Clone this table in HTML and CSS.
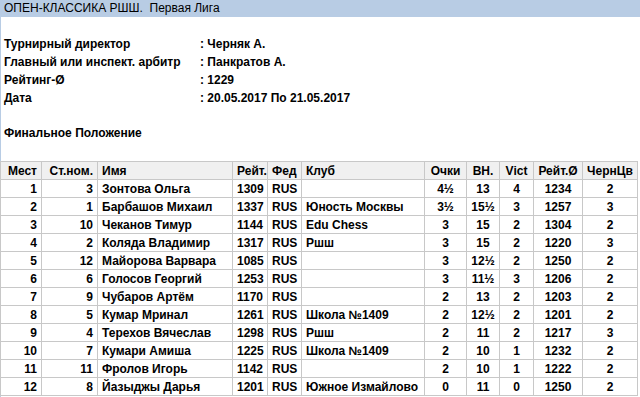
FILE: index.html
```html
<!DOCTYPE html>
<html lang="ru">
<head>
<meta charset="utf-8">
<link rel="stylesheet" href="styles.css">
</head>
<body>
<div class="page">
  <div class="title-bar">ОПЕН-КЛАССИКА РШШ.&nbsp; Первая Лига</div>
  <div class="info">
    <div class="info-row"><span class="info-label">Турнирный директор</span><span>: Черняк А.</span></div>
    <div class="info-row"><span class="info-label">Главный или инспект. арбитр</span><span>: Панкратов А.</span></div>
    <div class="info-row"><span class="info-label">Рейтинг-Ø</span><span>: 1229</span></div>
    <div class="info-row"><span class="info-label">Дата</span><span>: 20.05.2017 По 21.05.2017</span></div>
  </div>
  <div class="section-title">Финальное Положение</div>
  <table class="standings">
    <colgroup>
      <col class="c-place"><col class="c-start"><col class="c-name"><col class="c-rat"><col class="c-fed"><col class="c-club"><col class="c-pts"><col class="c-bh"><col class="c-vict"><col class="c-avg"><col class="c-black">
    </colgroup>
    <thead>
      <tr>
        <th class="r">Мест</th><th class="r">Ст.ном.</th><th class="l">Имя</th><th class="r">Рейт.</th><th class="l">Фед</th><th class="l">Клуб</th><th>Очки</th><th>ВН.</th><th>Vict</th><th>Рейт.Ø</th><th>ЧернЦв</th>
      </tr>
    </thead>
    <tbody>
      <tr><td class="r">1</td><td class="r">3</td><td class="l">Зонтова Ольга</td><td class="r">1309</td><td class="l">RUS</td><td class="l"></td><td>4½</td><td>13</td><td>4</td><td>1234</td><td>2</td></tr>
      <tr><td class="r">2</td><td class="r">1</td><td class="l">Барбашов Михаил</td><td class="r">1337</td><td class="l">RUS</td><td class="l">Юность Москвы</td><td>3½</td><td>15½</td><td>3</td><td>1257</td><td>3</td></tr>
      <tr><td class="r">3</td><td class="r">10</td><td class="l">Чеканов Тимур</td><td class="r">1144</td><td class="l">RUS</td><td class="l">Edu Chess</td><td>3</td><td>15</td><td>2</td><td>1304</td><td>2</td></tr>
      <tr><td class="r">4</td><td class="r">2</td><td class="l">Коляда Владимир</td><td class="r">1317</td><td class="l">RUS</td><td class="l">Ршш</td><td>3</td><td>15</td><td>2</td><td>1220</td><td>3</td></tr>
      <tr><td class="r">5</td><td class="r">12</td><td class="l">Майорова Варвара</td><td class="r">1085</td><td class="l">RUS</td><td class="l"></td><td>3</td><td>12½</td><td>2</td><td>1250</td><td>2</td></tr>
      <tr><td class="r">6</td><td class="r">6</td><td class="l">Голосов Георгий</td><td class="r">1253</td><td class="l">RUS</td><td class="l"></td><td>3</td><td>11½</td><td>3</td><td>1206</td><td>2</td></tr>
      <tr><td class="r">7</td><td class="r">9</td><td class="l">Чубаров Артём</td><td class="r">1170</td><td class="l">RUS</td><td class="l"></td><td>2</td><td>13</td><td>2</td><td>1203</td><td>2</td></tr>
      <tr><td class="r">8</td><td class="r">5</td><td class="l">Кумар Мринал</td><td class="r">1261</td><td class="l">RUS</td><td class="l">Школа №1409</td><td>2</td><td>12½</td><td>2</td><td>1201</td><td>2</td></tr>
      <tr><td class="r">9</td><td class="r">4</td><td class="l">Терехов Вячеслав</td><td class="r">1298</td><td class="l">RUS</td><td class="l">Ршш</td><td>2</td><td>11</td><td>2</td><td>1217</td><td>3</td></tr>
      <tr><td class="r">10</td><td class="r">7</td><td class="l">Кумари Амиша</td><td class="r">1225</td><td class="l">RUS</td><td class="l">Школа №1409</td><td>2</td><td>10</td><td>1</td><td>1232</td><td>2</td></tr>
      <tr><td class="r">11</td><td class="r">11</td><td class="l">Фролов Игорь</td><td class="r">1142</td><td class="l">RUS</td><td class="l"></td><td>2</td><td>10</td><td>1</td><td>1222</td><td>2</td></tr>
      <tr><td class="r">12</td><td class="r">8</td><td class="l">Йазыджы Дарья</td><td class="r">1201</td><td class="l">RUS</td><td class="l">Южное Измайлово</td><td>0</td><td>11</td><td>0</td><td>1250</td><td>2</td></tr>
    </tbody>
  </table>
</div>
</body>
</html>
```

FILE: styles.css
```css
html, body {
  margin: 0;
  padding: 0;
  background: #ffffff;
}
body {
  font-family: "Liberation Sans", Arial, sans-serif;
  font-size: 12px;
  color: #000000;
}
.page {
  border-left: 1px solid #b8cce4;
  min-height: 397px;
  box-sizing: border-box;
}
.title-bar {
  background: #b8cce4;
  height: 17px;
  line-height: 17px;
  padding-left: 4px;
  margin-left: -1px;
}
.info {
  padding: 18px 0 0 3px;
  font-weight: bold;
}
.info-row {
  display: flex;
  height: 18px;
  line-height: 18px;
}
.info-label {
  width: 196px;
}
.section-title {
  font-weight: bold;
  margin-top: 17px;
  padding-left: 3px;
  height: 18px;
  line-height: 18px;
}
.standings {
  margin-top: 19px;
  margin-left: -1px;
  border-collapse: collapse;
  table-layout: fixed;
  width: 637px;
  font-weight: bold;
}
.standings th,
.standings td {
  border: 1px solid #c8c8c8;
  height: 18px;
  padding: 0 4px;
  line-height: 16px;
  text-align: center;
  white-space: nowrap;
  overflow: hidden;
  box-sizing: border-box;
}
.standings th {
  background: #f0f0f0;
  font-weight: bold;
}
.standings .r { text-align: right; }
.standings .l { text-align: left; }
.c-place { width: 41px; }
.c-start { width: 56px; }
.c-name { width: 135px; }
.c-rat { width: 35px; }
.c-fed { width: 34px; }
.c-club { width: 123px; }
.c-pts { width: 42px; }
.c-bh { width: 33px; }
.c-vict { width: 34px; }
.c-avg { width: 49px; }
.c-black { width: 55px; }
```
